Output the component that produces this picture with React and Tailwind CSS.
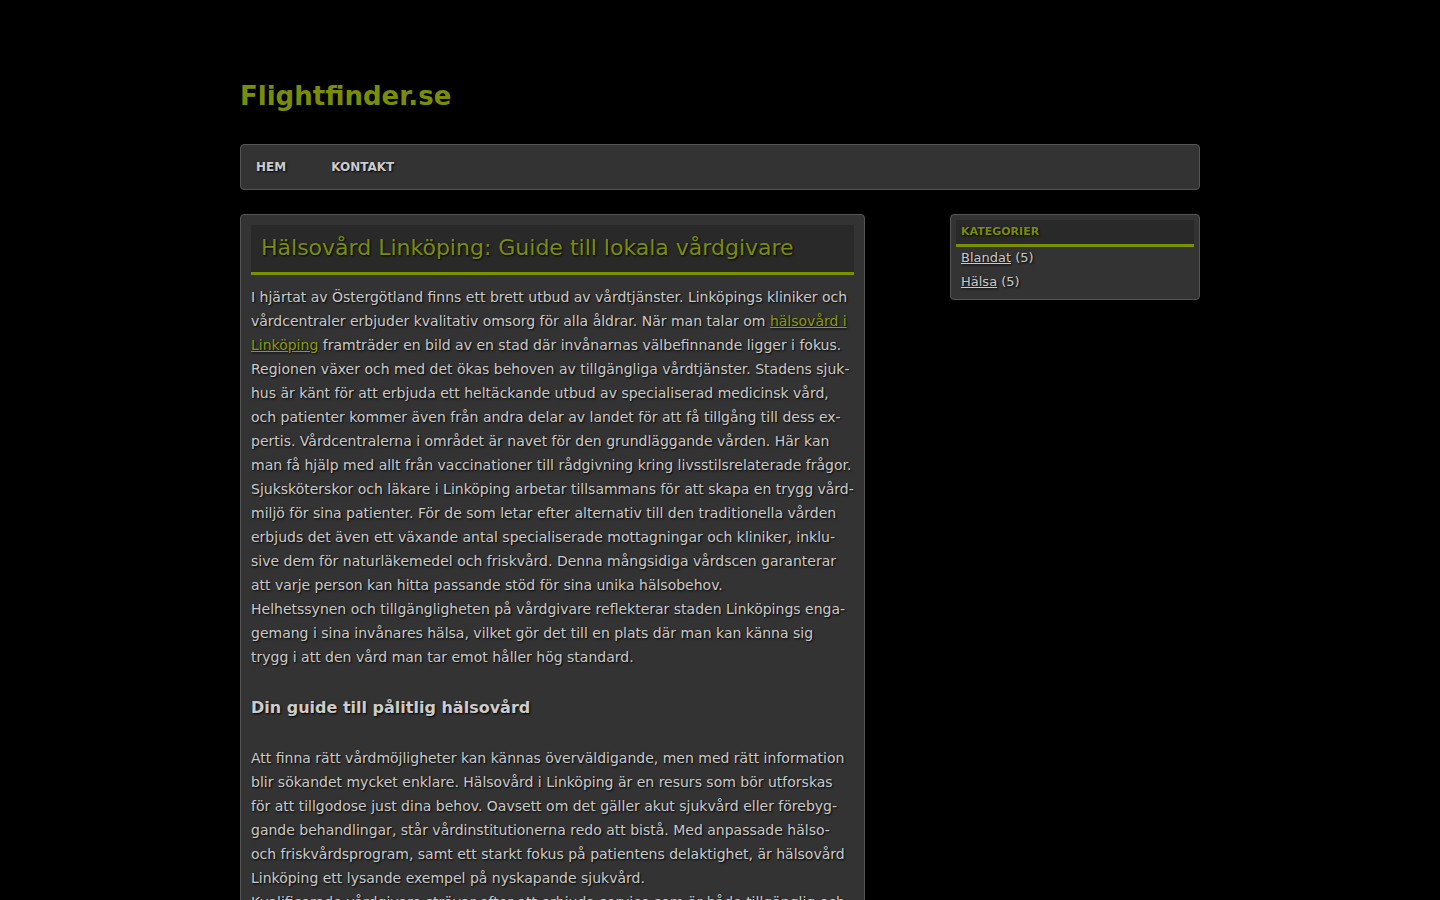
import React from 'react';

const shadow = '[text-shadow:1px_1px_2px_#000]';

const Page = () => {
    return (
        <div className="min-h-[900px] bg-black font-['DejaVu_Sans',sans-serif] text-[14px] text-[#cacaca]" lang="sv">
            <div className="mx-auto w-[960px]">
                {/* Header */}
                <header className="pt-[80px] pb-[31px]">
                    <h1 className="text-[26px] font-bold leading-[33px] text-[#7a8c0a]">Flightfinder.se</h1>
                </header>

                {/* Nav */}
                <nav className="flex h-[46px] items-center rounded-[4px] border border-[#555] bg-[#333] px-[15px]">
                    <a className={`mr-[45px] text-[12px] font-bold uppercase text-[#cccccc] ${shadow}`}>Hem</a>
                    <a className={`text-[12px] font-bold uppercase text-[#cccccc] ${shadow}`}>Kontakt</a>
                </nav>

                <div className="mt-[24px] flex items-start justify-between">
                    {/* Main */}
                    <main className="w-[625px] rounded-[4px] border border-[#555] bg-[#333] px-[10px] pt-[10px] pb-[40px]">
                        <div className="flex h-[50px] items-center border-b-[3px] border-[#7a9000] bg-[#292929] px-[10px] pb-[2px]">
                            <h2 className={`text-[22px] leading-none text-[#7a8c0a] ${shadow}`}>Hälsovård Linköping: Guide till lokala vårdgivare</h2>
                        </div>
                        <div className={`mt-[10px] leading-[24px] ${shadow}`}>
                            <p>
                                I hjärtat av Östergötland finns ett brett utbud av vårdtjänster. Linköpings kliniker och vårdcentraler erbjuder kvalitativ omsorg för alla åldrar. När man talar om <a className="text-[#8a9c10] underline">hälsovård i Linköping</a> framträder en bild av en stad där invånarnas välbefinnande ligger i fokus. Regionen växer och med det ökas behoven av tillgängliga vårdtjänster. Stadens sjuk{'\u00AD'}hus är känt för att erbjuda ett heltäckande utbud av specialiserad medicinsk vård, och patienter kommer även från andra delar av landet för att få tillgång till dess ex{'\u00AD'}pertis. Vårdcentralerna i området är navet för den grundläggande vården. Här kan man få hjälp med allt från vaccinationer till rådgivning kring livsstilsrelaterade frågor. Sjuksköterskor och läkare i Linköping arbetar tillsammans för att skapa en trygg vård{'\u00AD'}miljö för sina patienter. För de som letar efter alternativ till den traditionella vården erbjuds det även ett växande antal specialiserade mottagningar och kliniker, inklu{'\u00AD'}sive dem för naturläkemedel och friskvård. Denna mångsidiga vårdscen garanterar att varje person kan hitta passande stöd för sina unika hälsobehov.
                                <br />
                                Helhetssynen och tillgängligheten på vårdgivare reflekterar staden Linköpings enga{'\u00AD'}gemang i sina invånares hälsa, vilket gör det till en plats där man kan känna sig trygg i att den vård man tar emot håller hög standard.
                            </p>
                            <h3 className="mt-[27px] mb-[26px] text-[16px] font-bold leading-[24px] text-[#cccccc]">Din guide till pålitlig hälsovård</h3>
                            <p>
                                Att finna rätt vårdmöjligheter kan kännas överväldigande, men med rätt information blir sökandet mycket enklare. Hälsovård i Linköping är en resurs som bör utforskas för att tillgodose just dina behov. Oavsett om det gäller akut sjukvård eller förebyg{'\u00AD'}gande behandlingar, står vårdinstitutionerna redo att bistå. Med anpassade hälso- och friskvårdsprogram, samt ett starkt fokus på patientens delaktighet, är hälsovård Linköping ett lysande exempel på nyskapande sjukvård.
                                <br />
                                Kvalificerade vårdgivare strävar efter att erbjuda service som är både tillgänglig och personlig, och det märks i hur patienterna bemöts i varje steg av vårdprocessen.
                            </p>
                        </div>
                    </main>

                    {/* Sidebar */}
                    <aside className="w-[250px] rounded-[4px] border border-[#555] bg-[#333] px-[5px] pt-[5px] pb-[5px]">
                        <div className="flex h-[27px] items-center border-b-[3px] border-[#7a9000] bg-[#292929] px-[5px]">
                            <h4 className={`text-[11px] font-bold uppercase text-[#7a8c0a] ${shadow}`}>Kategorier</h4>
                        </div>
                        <ul className={`-mt-[1px] px-[5px] text-[13px] leading-[24px] ${shadow}`}>
                            <li><a className="underline">Blandat</a> (5)</li>
                            <li><a className="underline">Hälsa</a> (5)</li>
                        </ul>
                    </aside>
                </div>
            </div>
        </div>
    );
};

export default Page;
